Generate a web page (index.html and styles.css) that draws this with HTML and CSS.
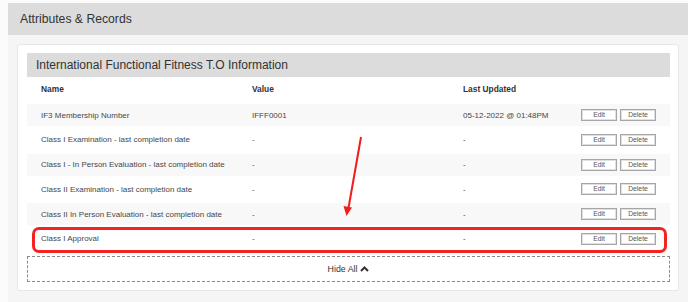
FILE: index.html
```html
<!DOCTYPE html>
<html lang="en">
<head>
<meta charset="utf-8">
<title>Attributes &amp; Records</title>
<link rel="stylesheet" href="styles.css">
</head>
<body>
<div class="panel">
  <div class="panel-head">Attributes &amp; Records</div>
  <div class="panel-body">
    <div class="card">
      <div class="card-title">International Functional Fitness T.O Information</div>
      <div class="cols">
        <span>Name</span><span>Value</span><span>Last Updated</span><span></span>
      </div>
      <div class="rows">
        <div class="row stripe"><span>IF3 Membership Number</span><span>IFFF0001</span><span>05-12-2022 @ 01:48PM</span><span class="acts"><button class="btn">Edit</button><button class="btn">Delete</button></span></div>
        <div class="row"><span>Class I Examination - last completion date</span><span>-</span><span>-</span><span class="acts"><button class="btn">Edit</button><button class="btn">Delete</button></span></div>
        <div class="row stripe"><span>Class I - In Person Evaluation - last completion date</span><span>-</span><span>-</span><span class="acts"><button class="btn">Edit</button><button class="btn">Delete</button></span></div>
        <div class="row"><span>Class II Examination - last completion date</span><span>-</span><span>-</span><span class="acts"><button class="btn">Edit</button><button class="btn">Delete</button></span></div>
        <div class="row stripe"><span>Class II In Person Evaluation - last completion date</span><span>-</span><span>-</span><span class="acts"><button class="btn">Edit</button><button class="btn">Delete</button></span></div>
        <div class="row highlight"><span>Class I Approval</span><span>-</span><span>-</span><span class="acts"><button class="btn">Edit</button><button class="btn">Delete</button></span></div>
      </div>
      <div class="hide-all">Hide All <svg class="chev" width="9" height="6" viewBox="0 0 9 6"><polyline points="1,5 4.5,1.5 8,5" fill="none" stroke="#333" stroke-width="2"/></svg></div>
      <svg class="arrow" width="30" height="90" viewBox="0 0 30 90"><line x1="24" y1="3" x2="11.5" y2="74" stroke="#f21c1c" stroke-width="2"/><polygon points="6.5,72 15,73.5 9.5,82" fill="#f21c1c"/></svg>
    </div>
  </div>
</div>
</body>
</html>
```
FILE: styles.css
```css
html, body {
  margin: 0;
  padding: 0;
  background: #fbfbfb;
}
body {
  padding: 3px 0 0 8px;
  height: 302px;
  box-sizing: border-box;
  overflow: hidden;
  font-family: "Liberation Sans", Arial, Helvetica, sans-serif;
}
.panel {
  background: #f5f5f5;
  height: 100%;
}
.panel-head {
  background: #dcdcdc;
  height: 31.5px;
  line-height: 32px;
  padding-left: 12px;
  font-size: 12.2px;
  color: #333;
}
.panel-body {
  padding: 9.5px 9px 0 9px;
}
.card {
  position: relative;
  background: #fff;
  border: 1px solid #e6e6e6;
  border-radius: 3px;
  padding: 8px 8px 8px 9px;
}
.card-title {
  background: #dcdcdc;
  height: 24px;
  line-height: 25px;
  padding-left: 9px;
  font-size: 12px;
  color: #333;
}
.cols, .row {
  display: grid;
  grid-template-columns: 211px 211px 1fr auto;
  align-items: center;
  padding: 0 14px;
}
.cols {
  height: 24px;
  font-size: 8.4px;
  font-weight: bold;
  color: #333;
}
.rows {
  display: flex;
  flex-direction: column;
  gap: 2.8px;
  margin-top: 3px;
}
.row {
  height: 22px;
  font-size: 8px;
  color: #474747;
}
.stripe {
  background: #f8f8f8;
}
.acts {
  display: flex;
  gap: 3px;
}
.btn {
  width: 36px;
  height: 12px;
  margin: 0;
  padding: 0;
  background: #fff;
  border: 1px solid #a6a6a6;
  box-shadow: inset 0 0 0 1px #e0e0e0;
  font-family: inherit;
  font-size: 6.8px;
  line-height: 10px;
  color: #555;
}
.highlight {
  position: relative;
}
.highlight::after {
  content: "";
  position: absolute;
  left: 5px;
  right: 3px;
  top: -1px;
  bottom: -3px;
  border: 3px solid #f52222;
  border-radius: 7px;
  pointer-events: none;
}
.hide-all {
  margin-top: 6px;
  height: 24px;
  border: 1px dashed #8a8a8a;
  display: flex;
  align-items: center;
  justify-content: center;
  gap: 3px;
  font-size: 8.8px;
  color: #333;
}
.chev {
  display: block;
}
.arrow {
  position: absolute;
  left: 319px;
  top: 89px;
}
```
